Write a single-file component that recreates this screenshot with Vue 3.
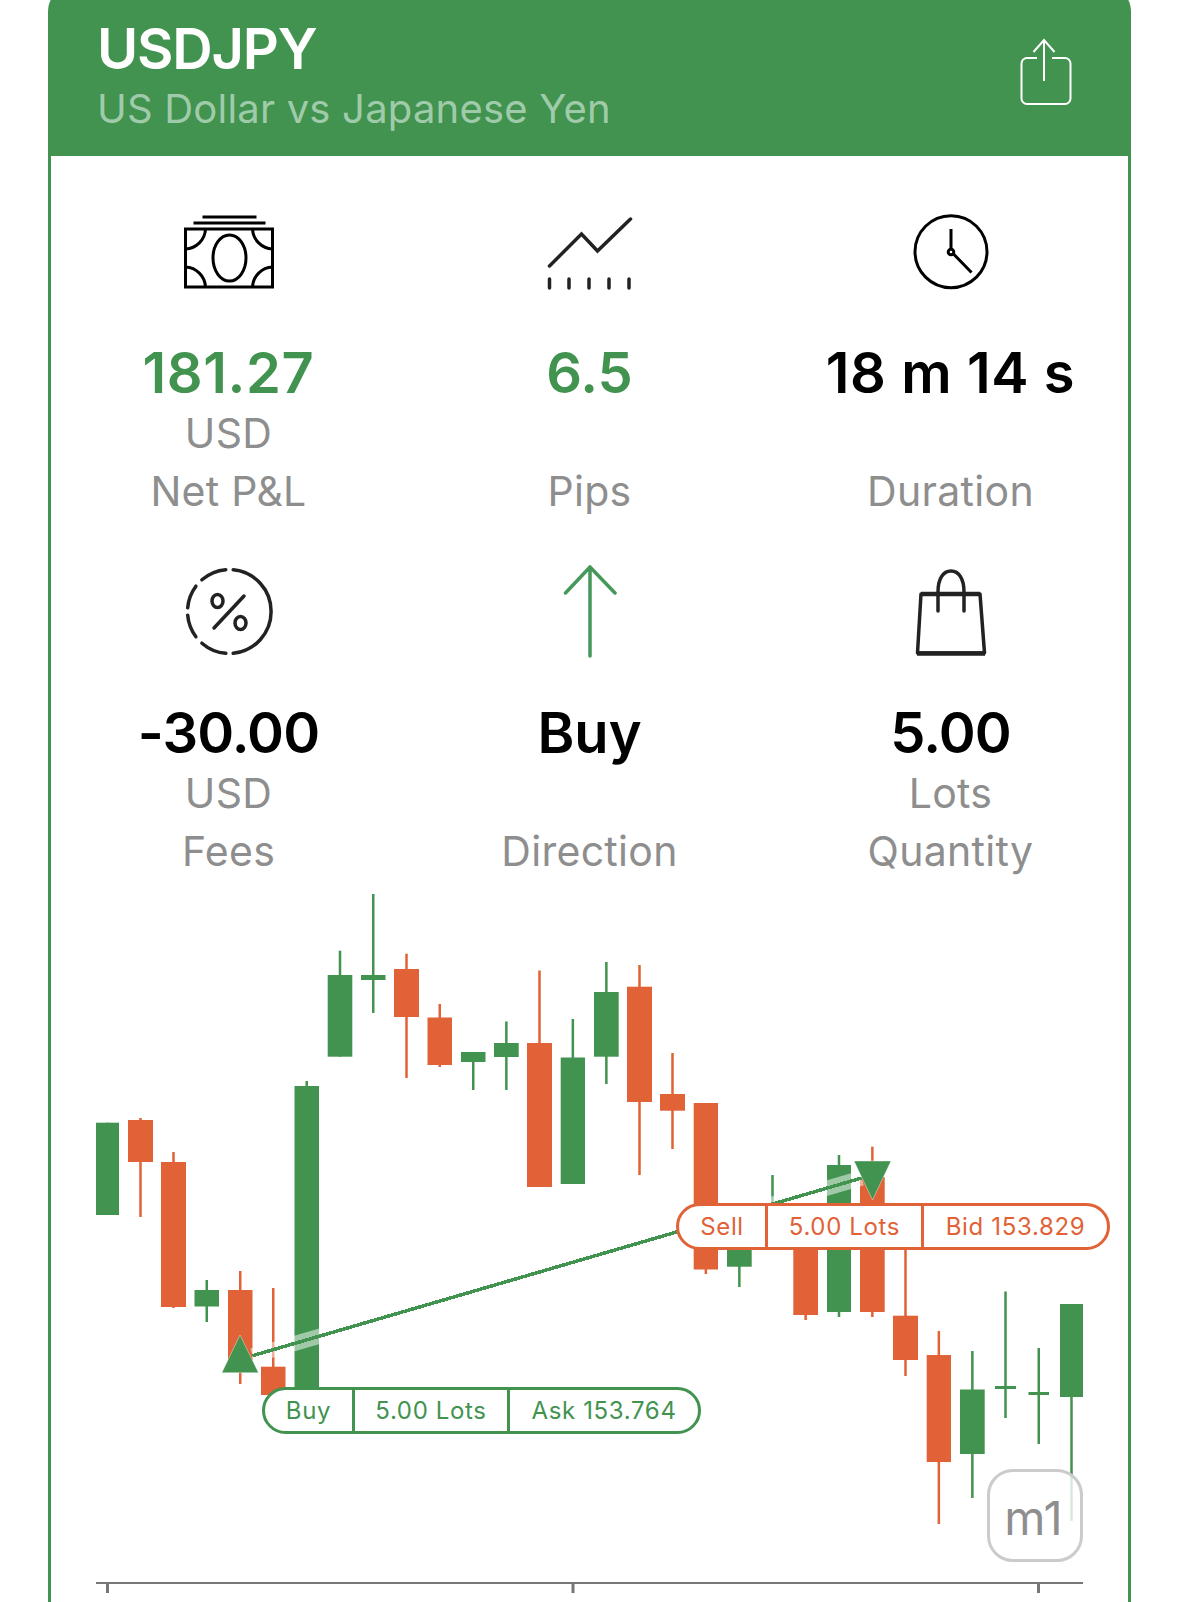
<script setup>
const GREEN = '#41934f'
const RED = '#e06236'

// left, right, top, bottom, wick top, wick bottom, colour
const candles = [
  [96, 119, 1122.7, 1215, 1122.7, 1215, 'g'],
  [128, 153, 1120, 1162, 1118, 1217, 'r'],
  [161, 186, 1162, 1307, 1152, 1308, 'r'],
  [194.5, 219, 1290, 1306.5, 1280, 1322, 'g'],
  [228, 252.5, 1290, 1360, 1271, 1384, 'r'],
  [261, 285.5, 1366.7, 1395, 1288, 1395, 'r'],
  [294.5, 319, 1086, 1395, 1081, 1395, 'g'],
  [327.7, 352.3, 975, 1056.7, 950.7, 1056.7, 'g'],
  [361, 385.5, 975, 980, 894, 1013, 'g'],
  [394, 419, 969, 1017, 953.7, 1078, 'r'],
  [427.5, 452, 1017.5, 1065, 1004, 1067, 'r'],
  [461, 485.5, 1052, 1062, 1052, 1090, 'g'],
  [494, 518.7, 1043, 1057, 1021.5, 1090, 'g'],
  [527, 552, 1043, 1187, 970.5, 1187, 'r'],
  [560.7, 585, 1057.5, 1184, 1019, 1184, 'g'],
  [594, 618.7, 992, 1056.7, 962, 1084, 'g'],
  [627, 652, 986.7, 1102, 965, 1175, 'r'],
  [660, 685, 1094, 1110.7, 1053, 1149, 'r'],
  [693.7, 718, 1103, 1269.5, 1103, 1274, 'r'],
  [727, 751.7, 1220, 1266.7, 1220, 1287, 'g'],
  [760, 785, 1210, 1240, 1175, 1240, 'g'],
  [793.3, 818, 1210, 1315, 1210, 1320, 'r'],
  [827, 851, 1165, 1312, 1155, 1317, 'g'],
  [860, 884.7, 1177, 1312, 1146.7, 1317, 'r'],
  [893, 918, 1315.7, 1360, 1240, 1376, 'r'],
  [926.7, 951, 1355, 1462, 1331, 1524, 'r'],
  [960, 984.7, 1389.5, 1454, 1351, 1498, 'g'],
  [995, 1016, 1386, 1389, 1291.5, 1418, 'g'],
  [1028.5, 1049, 1392, 1395, 1348, 1444, 'g'],
  [1060, 1083, 1304, 1397, 1304, 1521, 'g'],
].map(([left, right, top, bottom, wickTop, wickBottom, c], id) => ({
  id, left, right, top, bottom, wickTop, wickBottom,
  mid: (left + right) / 2,
  color: c === 'g' ? GREEN : RED,
}))

const ticks = [107, 572.5, 1038]
</script>

<template>
  <div class="screen">
    <section class="card">
      <header class="head">
        <div>
          <h1 class="symbol">USDJPY</h1>
          <p class="symbol-name">US Dollar vs Japanese Yen</p>
        </div>
        <svg class="share" viewBox="1020 36 52 70" fill="none" stroke="#fff" stroke-width="2">
          <path d="M1037 58h-10a5.5 5.5 0 0 0-5.500 5.500v35a5.500 5.500 0 0 0 5.500 5.500h38a5.500 5.500 0 0 0 5.500-5.500v-35a5.500 5.500 0 0 0-5.500-5.500h-13" />
          <path d="M1044 81V40M1033.500 52L1044 40l10.500 12" />
        </svg>
      </header>

      <div class="body">
        <div class="stats">
          <div class="stat">
            <svg class="icon" viewBox="168.500 205 120 100" fill="none" stroke="#000" stroke-width="3">
              <path d="M202 217h54M193 223h72" />
              <rect x="185" y="229" width="87" height="58" />
              <ellipse cx="229" cy="258" rx="16.500" ry="23" />
              <path d="M185 249a21 21 0 0 0 20-20M252 229a21 21 0 0 0 20 20M185 267a21 21 0 0 1 20 20M252 287a21 21 0 0 1 20-20" />
            </svg>
            <div class="value up wide">181.27</div>
            <div class="unit">USD</div>
            <div class="label">Net P&amp;L</div>
          </div>
          <div class="stat">
            <svg class="icon" viewBox="529.500 205 120 100" fill="none" stroke="#222" stroke-width="3.500" stroke-linecap="round" stroke-linejoin="miter">
              <path d="M549 266l32-32 16 17 33-32" />
              <path d="M549 279v9M568.500 279v9M588.500 279v9M608.500 279v9M628.500 279v9" />
            </svg>
            <div class="value up">6.5</div>
            <div class="unit"></div>
            <div class="label">Pips</div>
          </div>
          <div class="stat">
            <svg class="icon" viewBox="890.500 205 120 100" fill="none" stroke="#000" stroke-width="3">
              <circle cx="950.500" cy="251.700" r="36" />
              <path d="M950.500 229v20M953 254l18 18.500" />
              <circle cx="950.500" cy="252" r="2.800" />
            </svg>
            <div class="value wide">18 m 14 s</div>
            <div class="unit"></div>
            <div class="label">Duration</div>
          </div>

          <div class="stat">
            <svg class="icon" viewBox="168.500 565 120 100" fill="none" stroke="#222" stroke-width="3.500" stroke-linecap="round">
              <path d="M232.700 569.700A42 42 0 0 1 232.700 653.300" />
              <path d="M225.300 569.700A42 42 0 0 0 201.400 579.800M195.400 586.200A42 42 0 0 0 187.200 607.800M187.200 615.200A42 42 0 0 0 195.400 636.800M201.400 643.200A42 42 0 0 0 225.300 653.300" />
              <ellipse cx="217" cy="601" rx="5.500" ry="6.500" />
              <ellipse cx="240" cy="623" rx="5.500" ry="6.500" />
              <path d="M243.500 596l-30 32" />
            </svg>
            <div class="value tight">-30.00</div>
            <div class="unit">USD</div>
            <div class="label">Fees</div>
          </div>
          <div class="stat">
            <svg class="icon" viewBox="529.500 565 120 100" fill="none" stroke="#45985a" stroke-width="3.500" stroke-linecap="round">
              <path d="M589.500 567v89M565 593l24.500-26 25 26" />
            </svg>
            <div class="value">Buy</div>
            <div class="unit"></div>
            <div class="label">Direction</div>
          </div>
          <div class="stat">
            <svg class="icon" viewBox="890.500 565 120 100" fill="none" stroke="#222" stroke-width="3.500" stroke-linejoin="round">
              <path d="M920.500 594h59l4.500 59h-67z" />
              <path d="M920.500 594h59M916.500 653.500h68" stroke-width="4.500" />
              <path d="M937.500 611V592c0-13 5-21 13-21s13 8 13 21v19" stroke-linecap="round" />
            </svg>
            <div class="value tight">5.00</div>
            <div class="unit">Lots</div>
            <div class="label">Quantity</div>
          </div>
        </div>

        <div class="chart">
          <svg class="plot" viewBox="51 881 1077 721" width="1077" height="721">
            <g v-for="c in candles" :key="c.id">
              <rect :x="c.mid - 1.250" :y="c.wickTop" width="2.500" :height="c.wickBottom - c.wickTop" :fill="c.color" />
              <rect :x="c.left" :y="c.top" :width="c.right - c.left" :height="c.bottom - c.top" :fill="c.color" />
            </g>

            <rect x="96" y="1582" width="987" height="2" fill="#777" />
            <rect v-for="t in ticks" :key="t" :x="t - 1" y="1583" width="3" height="10" fill="#777" />

            <line x1="252.500" y1="1355.700" x2="861.700" y2="1178" stroke="#fff" stroke-opacity="0.500" stroke-width="15" />
            <line x1="252.500" y1="1355.700" x2="861.700" y2="1178" :stroke="GREEN" stroke-width="3.500" shape-rendering="crispEdges" />
            <path d="M240 1335l18.500 37.700h-36.700z" :fill="GREEN" stroke="#fff" stroke-opacity="0.400" />
            <path d="M872.500 1200L854 1161h37z" :fill="GREEN" stroke="#fff" stroke-opacity="0.400" />
          </svg>

          <div class="tag tag-buy">
            <span>Buy</span><span>5.00 Lots</span><span>Ask 153.764</span>
          </div>
          <div class="tag tag-sell">
            <span>Sell</span><span>5.00 Lots</span><span>Bid 153.829</span>
          </div>
          <div class="period">m1</div>
        </div>
      </div>
    </section>
  </div>
</template>

<style scoped>
.screen {
  height: 1602px;
  overflow: hidden;
  background: #fff;
  font-family: Inter, "Liberation Sans", sans-serif;
  padding: 0 48px;
  box-sizing: border-box;
}

.card {
  width: 1083px;
  display: flex;
  flex-direction: column;
}

.head {
  height: 156px;
  box-sizing: border-box;
  background: #41934f;
  display: flex;
  justify-content: space-between;
  padding: 18px 59px 0 49px;
  clip-path: inset(-13px 0 0 0 round 24px 24px 0 0);
}

.symbol {
  margin: 0;
  color: #fff;
  font-size: 56px;
  line-height: 62px;
  font-weight: 600;
  letter-spacing: -1.200px;
}

.symbol-name {
  margin: 0;
  color: #a0cbaa;
  font-size: 40px;
  line-height: 58px;
  letter-spacing: 0.200px;
}

.share {
  width: 52px;
  height: 70px;
  margin-top: 18px;
}

.body {
  border-left: 3px solid #41934f;
  border-right: 3px solid #41934f;
  flex: 1;
}

.stats {
  margin: 0 -3px;
  padding-top: 49px;
  display: grid;
  grid-template-columns: repeat(3, 361px);
  row-gap: 44px;
}

.stat {
  display: flex;
  flex-direction: column;
  align-items: center;
}

.icon {
  width: 120px;
  height: 100px;
  margin-bottom: 38px;
}

.value {
  font-size: 56px;
  line-height: 60px;
  font-weight: 600;
  color: #000;
  white-space: nowrap;
}

.wide {
  letter-spacing: 0.600px;
}

.tight {
  letter-spacing: -0.900px;
}

.up {
  color: #41934f;
}

.unit,
.label {
  color: #8e8e8e;
  font-size: 41px;
  letter-spacing: 0.300px;
}

.unit {
  line-height: 58px;
  height: 58px;
  padding-top: 1px;
}

.label {
  line-height: 58px;
  height: 59px;
}

.chart {
  position: relative;
  height: 721px;
}

.plot {
  display: block;
}

.tag {
  position: absolute;
  height: 47px;
  box-sizing: border-box;
  background: #fff;
  border: 3px solid;
  border-radius: 24px;
  display: grid;
  font-size: 24px;
  letter-spacing: 0.650px;
}

.tag span {
  display: flex;
  align-items: center;
  justify-content: center;
  border-left: 3px solid;
}

.tag span:first-child {
  border-left: 0;
}

.tag-buy {
  left: 211px;
  top: 506px;
  width: 439px;
  grid-template-columns: 87px 155px 1fr;
  color: #41934f;
}

.tag-sell {
  left: 625px;
  top: 322px;
  width: 434px;
  grid-template-columns: 86px 156px 1fr;
  color: #e06236;
}

.period {
  position: absolute;
  left: 936px;
  top: 588px;
  width: 96px;
  height: 93px;
  box-sizing: border-box;
  border: 3px solid #cbcbcb;
  border-radius: 26px;
  background: rgba(255, 255, 255, 0.8);
  color: #8e8e8e;
  font-size: 47px;
  display: flex;
  align-items: flex-end;
  justify-content: center;
  padding-bottom: 18px;
  padding-right: 3px;
  line-height: 1;
}
</style>
